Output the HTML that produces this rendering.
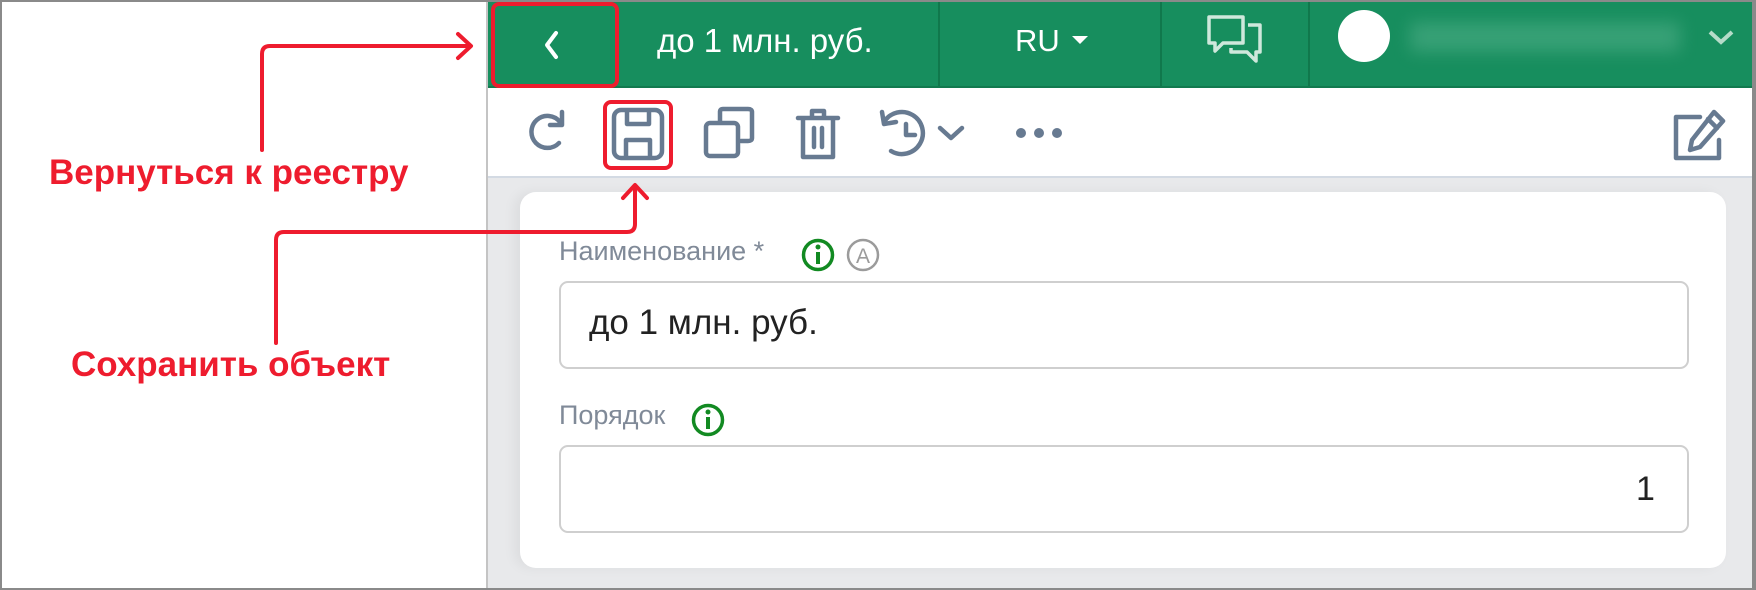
<!DOCTYPE html>
<html><head><meta charset="utf-8"><style>
*{margin:0;padding:0;box-sizing:border-box}
body{width:1756px;height:590px;overflow:hidden;background:#fff;font-family:"Liberation Sans",sans-serif;position:relative}
.a{position:absolute}
</style></head><body>
<div class="a" style="left:0;top:0;width:1756px;height:590px;border:2px solid #8a8a8a;border-right-width:4px"></div>
<div class="a" style="left:486px;top:2px;width:2px;height:586px;background:#c4c4c4"></div>
<div class="a" style="left:488px;top:2px;width:1264px;height:86px;background:#178e5e;border-bottom:2px solid #127a4f"></div>
<div class="a" style="left:938px;top:2px;width:2px;height:84px;background:#10784c"></div>
<div class="a" style="left:1160px;top:2px;width:2px;height:84px;background:#10784c"></div>
<div class="a" style="left:1308px;top:2px;width:2px;height:84px;background:#10784c"></div>
<div class="a" style="left:491px;top:2px;width:128px;height:86px;border:4px solid #ee1c2e;border-radius:8px"></div>
<svg class="a" style="left:540px;top:30px" width="24" height="30"><path d="M16 3 L7 15 L16 27" stroke="#fff" stroke-width="4" fill="none" stroke-linecap="round" stroke-linejoin="round"/></svg>
<div class="a" style="left:657px;top:22px;font-size:33px;color:#fff;white-space:nowrap">до 1 млн. руб.</div>
<div class="a" style="left:1015px;top:23px;font-size:31px;color:#fff">RU</div>
<svg class="a" style="left:1071px;top:34px" width="18" height="12"><path d="M1 2 L17 2 L9 10Z" fill="#fff"/></svg>
<svg class="a" style="left:1206px;top:14px" width="58" height="50" viewBox="0 0 58 50" fill="none" stroke="#cfe8dc" stroke-width="3.5" stroke-linejoin="round">
<path d="M3 3 H37 V29 H17 L9 37 V29 H3 Z"/>
<path d="M42 11 H54 V38 H50 V47 L41 38 H25 V34"/>
</svg>
<div class="a" style="left:1338px;top:10px;width:52px;height:52px;border-radius:50%;background:#fff"></div>
<div class="a" style="left:1410px;top:22px;width:270px;height:30px;background:#3fa57c;filter:blur(8px);opacity:.8"></div>
<svg class="a" style="left:1707px;top:29px" width="28" height="18"><path d="M3 3 L14 13 L25 3" stroke="#b5dcc9" stroke-width="4" fill="none"/></svg>
<div class="a" style="left:488px;top:176px;width:1264px;height:2px;background:#d3dae3"></div>
<svg class="a" style="left:520px;top:100px" width="1210" height="76" viewBox="520 100 1210 76" fill="none" stroke="#677a91" stroke-width="4.5" stroke-linecap="round" stroke-linejoin="round">
<path d="M559 143 A16 16 0 1 1 560 122"/>
<path d="M562 112 L562 125 L550 125" />
<rect x="614" y="110" width="48" height="48" rx="7"/>
<path d="M627 111 V124 H649 V111"/>
<path d="M626 157 V140 H650 V157"/>
<rect x="706" y="123" width="32" height="33" rx="4"/>
<path d="M720 121 V112 Q720 109 723 109 H748 Q752 109 752 112 V138 Q752 141 748 141 H741"/>
<path d="M798 118 H838"/>
<path d="M812 117 V111 H824 V117"/>
<path d="M803 119 V157 H833 V119"/>
<path d="M814 128 V147 M822 128 V147"/>
<path d="M884 122 A21 21 0 1 1 891 151"/>
<path d="M882 112 L884 124 L896 122"/>
<path d="M906 124 V135 H915"/>
<path d="M940 128 L951 138 L962 128"/>
<path d="M1700 117 H1676 V158 H1719 V140"/>
<path d="M1714 112 L1723 121 L1700 147 L1690 150 L1692 140 Z"/>
<path d="M1708 119 L1717 128"/>
</svg>
<div class="a" style="left:1016px;top:128px;width:10px;height:10px;border-radius:50%;background:#677a91;box-shadow:18px 0 0 #677a91,36px 0 0 #677a91"></div>
<div class="a" style="left:603px;top:100px;width:70px;height:70px;border:4px solid #ee1c2e;border-radius:8px"></div>
<div class="a" style="left:488px;top:178px;width:1264px;height:410px;background:#e8e9eb"></div>
<div class="a" style="left:520px;top:192px;width:1206px;height:376px;background:#fff;border-radius:16px;box-shadow:-6px 0 12px rgba(0,0,0,.05)"></div>
<div class="a" style="left:559px;top:236px;font-size:27px;color:#808a98;white-space:nowrap">Наименование *</div>
<svg class="a" style="left:800px;top:237px" width="84" height="36" fill="none">
<circle cx="18" cy="18" r="14.5" stroke="#128a22" stroke-width="3.5"/>
<rect x="16" y="15" width="4" height="12" fill="#128a22"/><circle cx="18" cy="10" r="2.5" fill="#128a22"/>
<circle cx="63" cy="18" r="15" stroke="#9b9b9b" stroke-width="2.5"/>
<text x="63" y="26" font-family="Liberation Sans" font-size="21" fill="#9b9b9b" text-anchor="middle">A</text>
</svg>
<div class="a" style="left:559px;top:281px;width:1130px;height:88px;border:2px solid #cfcfcf;border-radius:9px"></div>
<div class="a" style="left:589px;top:303px;font-size:35px;color:#222;white-space:nowrap">до 1 млн. руб.</div>
<div class="a" style="left:559px;top:400px;font-size:27px;color:#808a98">Порядок</div>
<svg class="a" style="left:690px;top:402px" width="36" height="36" fill="none">
<circle cx="18" cy="18" r="14.5" stroke="#128a22" stroke-width="3.5"/>
<rect x="16" y="15" width="4" height="12" fill="#128a22"/><circle cx="18" cy="10" r="2.5" fill="#128a22"/>
</svg>
<div class="a" style="left:559px;top:445px;width:1130px;height:88px;border:2px solid #cfcfcf;border-radius:9px"></div>
<div class="a" style="left:1636px;top:470px;font-size:34px;color:#222">1</div>
<svg class="a" style="left:0;top:0" width="700" height="400" fill="none" stroke="#ee1c2e" stroke-width="4" stroke-linecap="round" stroke-linejoin="round">
<path d="M262 150 V54 Q262 46 270 46 H470"/>
<path d="M458 34 L471 46 L458 58"/>
<path d="M276 343 V240 Q276 232 284 232 H627 Q635 232 635 224 V186"/>
<path d="M623 198 L635 185 L647 198"/>
</svg>
<div class="a" style="left:49px;top:153px;font-size:35px;font-weight:bold;color:#ee1c2e;white-space:nowrap">Вернуться к реестру</div>
<div class="a" style="left:71px;top:345px;font-size:35px;font-weight:bold;color:#ee1c2e;white-space:nowrap">Сохранить объект</div>
</body></html>
